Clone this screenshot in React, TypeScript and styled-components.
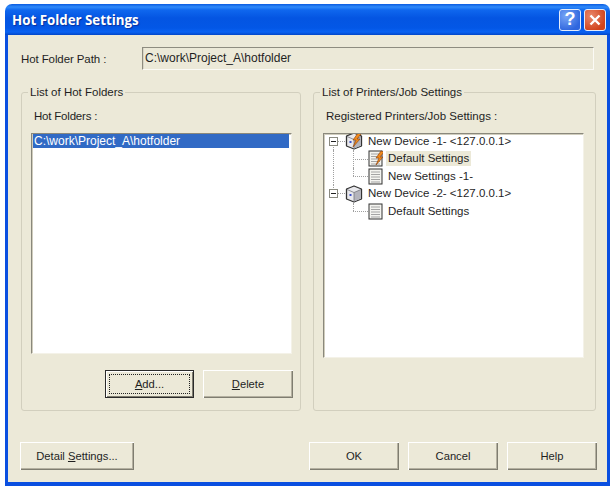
import * as React from 'react'
import styled, { createGlobalStyle, css } from 'styled-components'

const GlobalStyle = createGlobalStyle`
  html, body {
    margin: 0;
    padding: 0;
    background: #fff;
  }
  body {
    font-family: "Liberation Sans", Arial, sans-serif;
    font-size: 11.5px;
    color: #1f1f1f;
  }
`

const Page = styled.div`
  width: 614px;
  height: 486px;
  padding: 4px 4px 0 5px;
  box-sizing: border-box;
  overflow: hidden;
`

const Window = styled.div`
  height: 482px;
  display: flex;
  flex-direction: column;
  border-radius: 7px 7px 0 0;
  overflow: hidden;
`

const TitleBar = styled.div`
  height: 31px;
  flex: none;
  display: flex;
  align-items: center;
  padding: 0 4px 0 7px;
  box-sizing: border-box;
  background: linear-gradient(to bottom, #0a5be0 0, #2f8afa 3px, #0f67ee 6px, #0455e2 14px, #0357e6 24px, #0a62f2 28px, #0246c8 31px);
`

const Title = styled.div`
  flex: 1;
  font-family: "Open Sans", "Liberation Sans", sans-serif;
  font-weight: 700;
  font-size: 13.3px;
  color: #fff;
  text-shadow: 1px 1px 1px #0a2f9c;
`

const CaptionButton = styled.div<{ $variant: 'help' | 'close' }>`
  width: 22px;
  height: 22px;
  margin-left: 3px;
  box-sizing: border-box;
  border: 1px solid #e4ecfb;
  border-radius: 3px;
  display: flex;
  align-items: center;
  justify-content: center;
  color: #fff;
  font-weight: 700;
  font-size: 18px;
  ${(p) =>
    p.$variant === 'help'
      ? css`
          background: radial-gradient(circle at 30% 30%, #78a6f6, #2f66de 75%);
        `
      : css`
          background: radial-gradient(circle at 30% 30%, #e9876a, #d1431c 75%);
        `}
`

const Body = styled.div`
  flex: 1;
  background: #ece9d8;
  border: solid #0a4fe0;
  border-width: 0 3px 4px;
  padding: 12px 9px 0 13px;
`

const PathRow = styled.div`
  display: flex;
  align-items: center;
  height: 23px;
`

const PathLabel = styled.div`
  width: 121px;
  flex: none;
  letter-spacing: -0.1px;
`

const PathField = styled.div`
  width: 452px;
  height: 23px;
  box-sizing: border-box;
  flex: none;
  border: 1px solid;
  border-color: #8e8c80 #fbfaf5 #fbfaf5 #8e8c80;
  box-shadow: inset 1px 0 0 #d8d5c6;
  padding: 3px 0 0 2px;
  font-size: 12px;
`

const Columns = styled.div`
  display: flex;
  gap: 12px;
  margin-top: 15px;
`

const Group = styled.fieldset<{ $width: number }>`
  width: ${(p) => p.$width}px;
  height: 326px;
  box-sizing: border-box;
  margin: 0;
  padding: 0 9px;
  border: 1px solid #d2cfbe;
  border-radius: 3px;
  min-width: 0;
`

const GroupTitle = styled.legend`
  margin-left: -3px;
  padding: 0 2px;
  line-height: 14px;
`

const FieldLabel = styled.div<{ $tight?: boolean }>`
  line-height: 14px;
  margin: 10px 0 10px 3px;
  letter-spacing: ${(p) => (p.$tight ? '-0.2px' : '0')};
`

const ListFrame = styled.div<{ $height: number }>`
  width: 261px;
  height: ${(p) => p.$height}px;
  box-sizing: border-box;
  background: #fff;
  border: 1px solid;
  border-color: #8a887c #f4f2e8 #f4f2e8 #8a887c;
  box-shadow: inset 1px 1px 0 #d0cdbd;
  padding: 0 1px;
`

const FolderItem = styled.div`
  background: #316ac5;
  color: #fff;
  height: 14px;
  line-height: 14px;
  padding-left: 1px;
  font-size: 12px;
  margin-right: 1px;
`

const ButtonRow = styled.div`
  display: flex;
  justify-content: flex-end;
  gap: 9px;
  width: 262px;
  margin-top: 16px;
`

const Button = styled.div<{ $width: number; $focused?: boolean }>`
  position: relative;
  width: ${(p) => p.$width}px;
  height: 28px;
  box-sizing: border-box;
  display: flex;
  align-items: center;
  justify-content: center;
  font-size: 11.2px;
  background: #ece9d8;
  box-shadow: inset 1px 1px 0 #fff, inset -1px -1px 0 #7f7d70, inset -2px -2px 0 #b4b0a0;
  ${(p) =>
    p.$focused &&
    css`
      border: 1px solid #2a2a2a;
      box-shadow: inset 1px 1px 0 #fff, inset -1px -1px 0 #7f7d70;
      &::after {
        content: '';
        position: absolute;
        inset: 3px;
        border: 1px dotted #222;
      }
    `}
`

const Mnemonic = styled.span`
  text-decoration: underline;
`

const Footer = styled.div`
  display: flex;
  margin: 31px 1px 0 -1px;
`

const FooterRight = styled.div`
  margin-left: auto;
  display: flex;
  gap: 9px;
`

const TreeFrame = styled(ListFrame)`
  padding: 0 0 0 1px;
  overflow: hidden;
`

const TreeRows = styled.div`
  margin-top: -1.5px;
`

const TreeRow = styled.div<{ $trunk?: 'start' | 'full' | 'end' }>`
  position: relative;
  height: 17.5px;
  display: flex;
  align-items: center;
  white-space: nowrap;
  ${(p) =>
    p.$trunk &&
    css`
      &::before {
        content: '';
        position: absolute;
        left: 8px;
        top: ${p.$trunk === 'start' ? '50%' : '0'};
        bottom: ${p.$trunk === 'end' ? '50%' : '0'};
        border-left: 1px dotted #a0a0a0;
      }
    `}
`

const Expander = styled.span`
  position: relative;
  width: 9px;
  height: 9px;
  margin-left: 4px;
  flex: none;
  box-sizing: border-box;
  border: 1px solid #8a8a80;
  background: #fff;
  &::after {
    content: '';
    position: absolute;
    left: 1px;
    right: 1px;
    top: 3px;
    height: 1px;
    background: #222;
  }
`

const Stub = styled.span`
  width: 7px;
  flex: none;
  border-top: 1px dotted #a0a0a0;
`

const Elbow = styled.span<{ $last?: boolean }>`
  position: relative;
  margin-left: 28px;
  width: 15px;
  height: 100%;
  flex: none;
  &::before {
    content: '';
    position: absolute;
    left: 0;
    top: 0;
    bottom: ${(p) => (p.$last ? '50%' : '0')};
    border-left: 1px dotted #a0a0a0;
  }
  &::after {
    content: '';
    position: absolute;
    left: 0;
    right: 0;
    top: 50%;
    border-top: 1px dotted #a0a0a0;
  }
`

const TreeText = styled.span<{ $selected?: boolean }>`
  margin-left: ${(p) => (p.$selected ? '3px' : '5px')};
  padding: 0 ${(p) => (p.$selected ? '2px' : '0')};
  line-height: 15px;
  background: ${(p) => (p.$selected ? '#ece9d8' : 'transparent')};
`

const Bolt = () => (
  <path d="M13 1 L8 8 L11 8 L8 15 L15 7 L12 7 L16 2 Z" fill="#f08a1c" stroke="#8a3c08" strokeWidth="0.6" />
)

const DeviceIcon = ({ active }: { active?: boolean }) => (
  <svg width="18" height="18" viewBox="0 0 18 18" style={{ flex: 'none' }}>
    <path d="M9 1 L16.5 4 V14 L9 17 L1.5 14 V4 Z" fill="#e8e8ec" stroke="#333" strokeWidth="1.3" strokeLinejoin="round" />
    <path d="M9 7.5 L16 4.5 V13.5 L9 16.5 Z" fill="#b4b4bc" />
    <path d="M2 4.5 L9 7.5 L16 4.5 M9 7.5 V16.5" fill="none" stroke="#77777f" strokeWidth="0.8" />
    <rect x="4.5" y="9" width="2" height="2" fill="#3c50c8" />
    {active && <Bolt />}
  </svg>
)

const SettingsIcon = ({ active }: { active?: boolean }) => (
  <svg width="15" height="17" viewBox="0 0 15 17" style={{ flex: 'none' }}>
    <rect x="1" y="1" width="13" height="15" fill="#f4f4f0" stroke="#333" strokeWidth="1" />
    <path d="M3 4 H12 M3 6.5 H12 M3 9 H12 M3 11.5 H12 M3 14 H12" stroke="#a4a4a4" strokeWidth="1" />
    {active && <Bolt />}
  </svg>
)

const CloseGlyph = () => (
  <svg width="14" height="14" viewBox="0 0 14 14">
    <path d="M2.5 2.5 L11.5 11.5 M11.5 2.5 L2.5 11.5" stroke="#fff" strokeWidth="2.4" />
  </svg>
)

export default function App() {
  return (
    <Page>
      <GlobalStyle />
      <Window>
        <TitleBar>
          <Title>Hot Folder Settings</Title>
          <CaptionButton $variant="help">?</CaptionButton>
          <CaptionButton $variant="close">
            <CloseGlyph />
          </CaptionButton>
        </TitleBar>
        <Body>
          <PathRow>
            <PathLabel>Hot Folder Path :</PathLabel>
            <PathField>C:\work\Project_A\hotfolder</PathField>
          </PathRow>
          <Columns>
            <Group $width={280}>
              <GroupTitle>List of Hot Folders</GroupTitle>
              <FieldLabel $tight>Hot Folders :</FieldLabel>
              <ListFrame $height={221}>
                <FolderItem>C:\work\Project_A\hotfolder</FolderItem>
              </ListFrame>
              <ButtonRow>
                <Button $width={89} $focused>
                  <span>
                    <Mnemonic>A</Mnemonic>dd...
                  </span>
                </Button>
                <Button $width={90}>
                  <span>
                    <Mnemonic>D</Mnemonic>elete
                  </span>
                </Button>
              </ButtonRow>
            </Group>
            <Group $width={283}>
              <GroupTitle>List of Printers/Job Settings</GroupTitle>
              <FieldLabel>Registered Printers/Job Settings :</FieldLabel>
              <TreeFrame $height={225}>
                <TreeRows>
                  <TreeRow $trunk="start">
                    <Expander />
                    <Stub />
                    <DeviceIcon active />
                    <TreeText>New Device -1- &lt;127.0.0.1&gt;</TreeText>
                  </TreeRow>
                  <TreeRow $trunk="full">
                    <Elbow />
                    <SettingsIcon active />
                    <TreeText $selected>Default Settings</TreeText>
                  </TreeRow>
                  <TreeRow $trunk="full">
                    <Elbow $last />
                    <SettingsIcon />
                    <TreeText>New Settings -1-</TreeText>
                  </TreeRow>
                  <TreeRow $trunk="end">
                    <Expander />
                    <Stub />
                    <DeviceIcon />
                    <TreeText>New Device -2- &lt;127.0.0.1&gt;</TreeText>
                  </TreeRow>
                  <TreeRow>
                    <Elbow $last />
                    <SettingsIcon />
                    <TreeText>Default Settings</TreeText>
                  </TreeRow>
                </TreeRows>
              </TreeFrame>
            </Group>
          </Columns>
          <Footer>
            <Button $width={114}>
              <span>
                Detail <Mnemonic>S</Mnemonic>ettings...
              </span>
            </Button>
            <FooterRight>
              <Button $width={90}>OK</Button>
              <Button $width={90}>Cancel</Button>
              <Button $width={90}>Help</Button>
            </FooterRight>
          </Footer>
        </Body>
      </Window>
    </Page>
  )
}
